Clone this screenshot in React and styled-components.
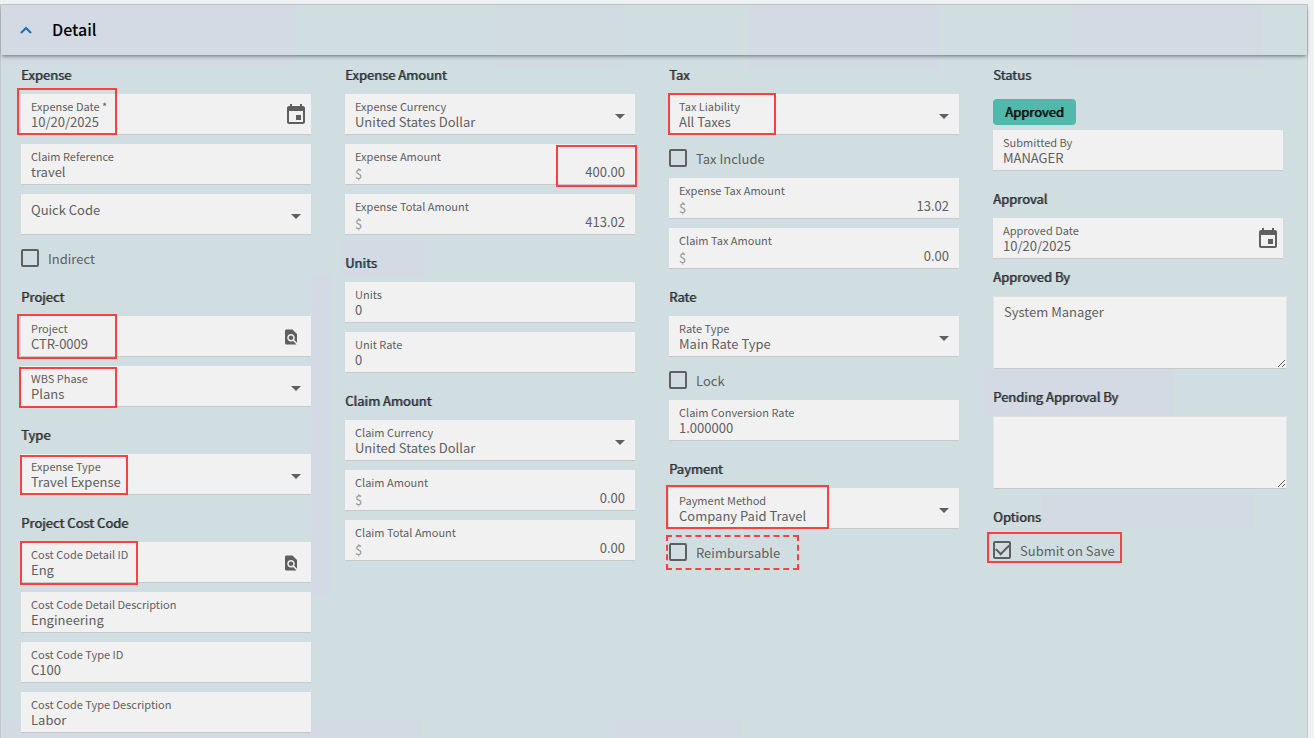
import React, { useId } from 'react';
import styled, { createGlobalStyle } from 'styled-components';

const GlobalStyle = createGlobalStyle`
    * {
        box-sizing: border-box;
    }
    body {
        margin: 0;
        background: #eff2f3;
        color: #5f5f5f;
        font-family: "Noto Sans CJK SC", "Open Sans", sans-serif;
    }
    input, select, textarea, button {
        font-family: inherit;
        color: inherit;
    }
`;

function CalendarIcon() {
    return (
        <svg width="24" height="24" viewBox="0 0 24 24" fill="currentColor" aria-hidden="true">
            <path d="M17 12h-5v5h5v-5zM16 1v2H8V1H6v2H5c-1.11 0-1.99.9-1.99 2L3 19c0 1.1.89 2 2 2h14c1.1 0 2-.9 2-2V5c0-1.1-.9-2-2-2h-1V1h-2zm3 18H5V8h14v11z" />
        </svg>
    );
}

function LookupIcon() {
    return (
        <svg width="18" height="18" viewBox="0 0 24 24" fill="currentColor" aria-hidden="true">
            <path d="M20 19.59V8l-6-6H6c-1.1 0-1.99.9-1.99 2L4 20c0 1.1.89 2 1.99 2H18c.45 0 .85-.15 1.19-.4l-4.43-4.43c-.8.52-1.74.83-2.76.83-2.76 0-5-2.24-5-5s2.24-5 5-5 5 2.24 5 5c0 1.02-.31 1.96-.83 2.75L20 19.59zM9 13c0 1.66 1.34 3 3 3s3-1.34 3-3-1.34-3-3-3-3 1.34-3 3z" />
        </svg>
    );
}

function TextField({ label, value, icon, mark }) {
    const id = useId();
    return (
        <Field>
            <FieldLabel htmlFor={id}>{label}</FieldLabel>
            <FieldInput id={id} type="text" defaultValue={value} />
            {icon === 'date' && <IconButton type="button" aria-label={`Pick ${label}`}><CalendarIcon /></IconButton>}
            {icon === 'lookup' && <IconButton type="button" $inset aria-label={`Find ${label}`}><LookupIcon /></IconButton>}
            {mark && <Mark $box={mark} />}
        </Field>
    );
}

function MoneyField({ label, value, mark }) {
    const id = useId();
    return (
        <Field>
            <FieldLabel htmlFor={id}>{label}</FieldLabel>
            <MoneyRow>
                <Currency>$</Currency>
                <FieldInput id={id} type="text" defaultValue={value} $right />
            </MoneyRow>
            {mark && <Mark $box={mark} />}
        </Field>
    );
}

function SelectField({ label, value, mark }) {
    const id = useId();
    return (
        <Field>
            <FieldLabel htmlFor={id} $empty={!value}>{label}</FieldLabel>
            <FieldSelect id={id} defaultValue={value}>
                <option value={value}>{value}</option>
            </FieldSelect>
            <Caret width="10" height="5" viewBox="0 0 10 5" aria-hidden="true">
                <path d="M0 0h10L5 5z" fill="currentColor" />
            </Caret>
            {mark && <Mark $box={mark} />}
        </Field>
    );
}

function CheckField({ label, checked, mark, dashed }) {
    return (
        <CheckRow>
            <CheckLabel>
                <CheckBox type="checkbox" defaultChecked={checked} />
                <CheckText>{label}</CheckText>
            </CheckLabel>
            {mark && <Mark $box={mark} $dashed={dashed} />}
        </CheckRow>
    );
}

function NoteField({ title, value, tight }) {
    const id = useId();
    return (
        <>
            <Title $tight={tight}><label htmlFor={id}>{title}</label></Title>
            <Note id={id} defaultValue={value} />
        </>
    );
}

export default function App() {
    return (
        <>
            <GlobalStyle />
            <Panel>
                <PanelHeader>
                    <Toggle type="button" aria-expanded="true" aria-label="Collapse detail">
                        <svg width="12" height="8" viewBox="0 0 12 8" fill="none" aria-hidden="true">
                            <path d="M1 7l5-5 5 5" stroke="#1c6fb0" strokeWidth="2" />
                        </svg>
                    </Toggle>
                    <PanelTitle>Detail</PanelTitle>
                </PanelHeader>
                <Columns>
                    <Column>
                        <Title>Expense</Title>
                        <TextField label="Expense Date *" value="10/20/2025" icon="date" mark={{ left: -4, top: -6, width: 100, height: 47 }} />
                        <TextField label="Claim Reference" value="travel" />
                        <SelectField label="Quick Code" value="" />
                        <CheckField label="Indirect" />
                        <Title>Project</Title>
                        <TextField label="Project" value="CTR-0009" icon="lookup" mark={{ left: -4, top: -2, width: 100, height: 45 }} />
                        <SelectField label="WBS Phase" value="Plans" mark={{ left: -2, top: 1, width: 98, height: 41 }} />
                        <Title>Type</Title>
                        <SelectField label="Expense Type" value="Travel Expense" mark={{ left: -1, top: 1, width: 108, height: 40 }} />
                        <Title>Project Cost Code</Title>
                        <TextField label="Cost Code Detail ID" value="Eng" icon="lookup" mark={{ left: -1, top: -1, width: 118, height: 44 }} />
                        <TextField label="Cost Code Detail Description" value="Engineering" />
                        <TextField label="Cost Code Type ID" value="C100" />
                        <TextField label="Cost Code Type Description" value="Labor" />
                    </Column>
                    <Column>
                        <Title>Expense Amount</Title>
                        <SelectField label="Expense Currency" value="United States Dollar" />
                        <MoneyField label="Expense Amount" value="400.00" mark={{ right: -2, top: 1, width: 81, height: 42 }} />
                        <MoneyField label="Expense Total Amount" value="413.02" />
                        <Title>Units</Title>
                        <TextField label="Units" value="0" />
                        <TextField label="Unit Rate" value="0" />
                        <Title>Claim Amount</Title>
                        <SelectField label="Claim Currency" value="United States Dollar" />
                        <MoneyField label="Claim Amount" value="0.00" />
                        <MoneyField label="Claim Total Amount" value="0.00" />
                    </Column>
                    <Column>
                        <Title>Tax</Title>
                        <SelectField label="Tax Liability" value="All Taxes" mark={{ left: -1, top: -1, width: 108, height: 42 }} />
                        <CheckField label="Tax Include" />
                        <MoneyField label="Expense Tax Amount" value="13.02" />
                        <MoneyField label="Claim Tax Amount" value="0.00" />
                        <Title>Rate</Title>
                        <SelectField label="Rate Type" value="Main Rate Type" />
                        <CheckField label="Lock" />
                        <TextField label="Claim Conversion Rate" value="1.000000" />
                        <Title>Payment</Title>
                        <SelectField label="Payment Method" value="Company Paid Travel" mark={{ left: -3, top: -3, width: 163, height: 44 }} />
                        <CheckField label="Reimbursable" dashed mark={{ left: -3, top: -3, width: 133, height: 35 }} />
                    </Column>
                    <Column>
                        <Title>Status</Title>
                        <Badge>Approved</Badge>
                        <TextField label="Submitted By" value="MANAGER" />
                        <Title>Approval</Title>
                        <TextField label="Approved Date" value="10/20/2025" icon="date" />
                        <NoteField title="Approved By" value="System Manager" tight />
                        <NoteField title="Pending Approval By" value="" />
                        <Title>Options</Title>
                        <CheckField label="Submit on Save" checked mark={{ left: -6, top: -4, width: 135, height: 31 }} />
                    </Column>
                </Columns>
            </Panel>
        </>
    );
}

const lilac = 'linear-gradient(#d3dae4, #d3dae4)';
const paleLilac = 'linear-gradient(#d1dbe2, #d1dbe2)';

// pale teal with a few faint lilac patches showing through
const Panel = styled.main`
    margin: 4px 6px 0 0;
    border: 1px solid #c3c8ca;
    background:
        ${lilac} 0 0 / 295px 60px no-repeat,
        ${paleLilac} 42% 0 / 127px 64px no-repeat,
        ${lilac} 67% 0 / 190px 64px no-repeat,
        ${lilac} 96% 0 / 190px 64px no-repeat,
        ${lilac} 310px 270px / 20px 320px no-repeat,
        ${lilac} 340px 235px / 84px 36px no-repeat,
        ${lilac} 88% 362px / 190px 50px no-repeat,
        ${lilac} 95% 490px / 210px 32px no-repeat,
        ${lilac} 0 100% / 420px 28px no-repeat,
        ${lilac} 52% 100% / 126px 28px no-repeat,
        #d0dee1;
`;

const PanelHeader = styled.header`
    display: flex;
    align-items: center;
    height: 50px;
    padding: 0 18px;
    gap: 19px;
    box-shadow: 0 2px 4px -1px rgba(0, 0, 0, 0.5);
    background:
        ${lilac} 0 0 / 295px 100% no-repeat,
        ${paleLilac} 42% 0 / 127px 100% no-repeat,
        ${lilac} 67% 0 / 190px 100% no-repeat,
        ${lilac} 96% 0 / 190px 100% no-repeat,
        #d0dee1;
`;

const Toggle = styled.button`
    display: flex;
    align-items: center;
    justify-content: center;
    width: 14px;
    height: 24px;
    padding: 0;
    border: 0;
    background: none;
`;

const PanelTitle = styled.h1`
    margin: 0;
    padding-bottom: 2px;
    color: #000;
    font-size: 16px;
    line-height: 24px;
    font-weight: 500;
`;

const Columns = styled.div`
    display: grid;
    grid-template-columns: repeat(4, minmax(0, 1fr));
    gap: 34px;
    padding: 1px 24px 6px 20px;
`;

const Column = styled.section`
    display: flex;
    flex-direction: column;
`;

const Title = styled.h2`
    margin: 0;
    padding: ${({ $tight }) => ($tight ? '0 0 10px' : '10px 0')};
    color: #2b2e30;
    font-size: 13px;
    line-height: 18px;
    font-weight: 400;
    text-shadow: 1px 0 rgba(43, 46, 48, 0.6);
`;

const Field = styled.div`
    position: relative;
    display: flex;
    flex-direction: column;
    height: 41px;
    margin-bottom: 9px;
    padding: 4px 10px 0;
    border-bottom: 1px solid #c6cacb;
    background: #f1f1f1;
`;

const FieldLabel = styled.label`
    font-size: ${({ $empty }) => ($empty ? '13px' : '11px')};
    line-height: ${({ $empty }) => ($empty ? '24px' : '16px')};
`;

const FieldInput = styled.input`
    width: 100%;
    min-width: 0;
    height: 16px;
    padding: 0;
    border: 0;
    outline: 0;
    background: none;
    font-size: 13px;
    line-height: 16px;
    text-align: ${({ $right }) => ($right ? 'right' : 'left')};
`;

const FieldSelect = styled.select`
    appearance: none;
    height: 16px;
    padding: 0;
    border: 0;
    outline: 0;
    background: none;
    font-size: 13px;
    line-height: 16px;
`;

const MoneyRow = styled.div`
    display: flex;
`;

const Currency = styled.span`
    color: #9a9a9a;
    font-size: 13px;
    line-height: 20px;
`;

const IconButton = styled.button`
    position: absolute;
    top: 9px;
    right: ${({ $inset }) => ($inset ? '11px' : '3px')};
    display: flex;
    align-items: center;
    justify-content: center;
    height: 24px;
    padding: 0;
    border: 0;
    background: none;
`;

const Caret = styled.svg`
    position: absolute;
    top: 20px;
    right: 10px;
    pointer-events: none;
`;

const CheckRow = styled.div`
    position: relative;
    height: 28px;
    margin-bottom: 6px;
`;

const CheckLabel = styled.label`
    display: flex;
    align-items: center;
    gap: 9px;
    height: 28px;
    font-size: 13px;
    line-height: 18px;
`;

const CheckText = styled.span`
    padding-top: 2px;
`;

const CheckBox = styled.input`
    appearance: none;
    display: grid;
    place-items: center;
    width: 18px;
    height: 18px;
    margin: 0;
    border: 2px solid #5f5f5f;
    border-radius: 2px;

    &:checked::before {
        content: "";
        width: 11px;
        height: 6px;
        border: solid #5f5f5f;
        border-width: 0 0 2px 2px;
        transform: translateY(-2px) rotate(-45deg);
    }
`;

const Badge = styled.span`
    align-self: flex-start;
    margin: 5px 0;
    padding: 4px 12px;
    border-radius: 4px;
    background: #50b9ab;
    color: #000;
    font-size: 13px;
    line-height: 18px;
    font-weight: 400;
    text-shadow: 1px 0 rgba(0, 0, 0, 0.6);
`;

const Note = styled.textarea`
    width: calc(100% + 4px);
    height: 73px;
    margin-bottom: 9px;
    padding: 5px 10px;
    border: 1px solid #e0e3e4;
    border-bottom-color: #c6cacb;
    outline: 0;
    background: #f1f1f1;
    font-size: 13px;
    line-height: 20px;
    resize: vertical;
`;

// frame drawn over a field that needs attention
const Mark = styled.span`
    position: absolute;
    top: ${({ $box }) => $box.top}px;
    ${({ $box }) => ($box.right !== undefined ? `right: ${$box.right}px;` : `left: ${$box.left}px;`)}
    width: ${({ $box }) => $box.width}px;
    height: ${({ $box }) => $box.height}px;
    border: 2px ${({ $dashed }) => ($dashed ? 'dashed' : 'solid')} #f94141;
    pointer-events: none;
`;
